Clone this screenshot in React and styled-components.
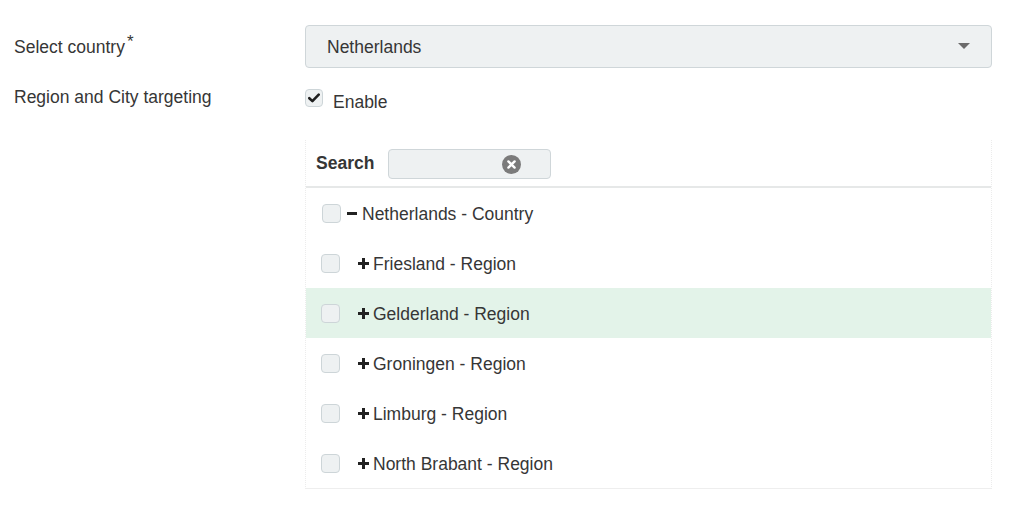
import React, { useState } from "react";
import styled, { createGlobalStyle } from "styled-components";

const GlobalStyle = createGlobalStyle`
    html, body {
        margin: 0;
        padding: 0;
        background: #ffffff;
    }
    body {
        font-family: "Liberation Sans", Arial, Helvetica, sans-serif;
        font-size: 17.5px;
        color: #363636;
    }
`;

const regions = [
    "Friesland - Region",
    "Gelderland - Region",
    "Groningen - Region",
    "Limburg - Region",
    "North Brabant - Region",
];

function CheckIcon() {
    return (
        <svg width="12" height="10" viewBox="0 0 12 10">
            <path d="M1.3 5.2 L4.4 8.1 L10.7 1.7" fill="none" stroke="#1e1e1e" strokeWidth="2.6" strokeLinecap="round" strokeLinejoin="round" />
        </svg>
    );
}

function ClearIcon() {
    return (
        <svg width="19" height="19" viewBox="0 0 19 19">
            <circle cx="9.5" cy="9.5" r="9.5" fill="#7b7b7b" />
            <path d="M6.4 6.4 L12.6 12.6 M12.6 6.4 L6.4 12.6" stroke="#fff" strokeWidth="2.4" strokeLinecap="round" />
        </svg>
    );
}

function App() {
    const [enabled, setEnabled] = useState(true);
    const [hovered] = useState(1);

    return (
        <Page>
            <GlobalStyle />
            <FormRow $height={43} $top={25}>
                <Label>Select country<Star>*</Star></Label>
                <Select>
                    <span>Netherlands</span>
                    <Caret />
                </Select>
            </FormRow>
            <FormRow $height={30} $top={15}>
                <Label $shift={-2}>Region and City targeting</Label>
                <EnableLine onClick={() => setEnabled(!enabled)}>
                    <Box $size={18}>{enabled && <CheckIcon />}</Box>
                    <EnableText>Enable</EnableText>
                </EnableLine>
            </FormRow>
            <FormRow $top={27}>
                <div />
                <Panel>
                    <SearchBar>
                        <SearchLabel>Search</SearchLabel>
                        <SearchInput>
                            <ClearIcon />
                        </SearchInput>
                    </SearchBar>
                    <TreeRow>
                        <Box $size={19} $offset={1}></Box>
                        <Minus />
                        <NodeText>Netherlands - Country</NodeText>
                    </TreeRow>
                    {regions.map((name, i) => (
                        <TreeRow key={name} $active={i === hovered}>
                            <Box $size={19}></Box>
                            <Plus />
                            <NodeText>{name}</NodeText>
                        </TreeRow>
                    ))}
                </Panel>
            </FormRow>
        </Page>
    );
}

const Page = styled.div`
    width: 1024px;
    padding-bottom: 20px;
`;

const FormRow = styled.div`
    display: grid;
    grid-template-columns: 291px 1fr;
    align-items: center;
    padding: 0 32px 0 14px;
    margin-top: ${p => p.$top || 0}px;
    min-height: ${p => p.$height ? p.$height + "px" : "auto"};
`;

const Label = styled.div`
    line-height: 20px;
    margin-top: ${p => p.$shift ?? 1}px;
`;

const Star = styled.span`
    font-size: 17px;
    margin-left: 2px;
    position: relative;
    top: -6px;
`;

const Select = styled.div`
    height: 43px;
    box-sizing: border-box;
    display: flex;
    align-items: center;
    justify-content: space-between;
    padding: 2px 21px 0 21px;
    background: #eef1f2;
    border: 1px solid #cfd6d9;
    border-radius: 4px;
`;

const Caret = styled.span`
    width: 0;
    height: 0;
    border-left: 6.5px solid transparent;
    border-right: 6.5px solid transparent;
    border-top: 6px solid #6b6b6b;
    margin-top: -4px;
`;

const EnableLine = styled.label`
    display: flex;
    align-items: center;
    gap: 10px;
    height: 30px;
    cursor: pointer;
`;

const EnableText = styled.span`
    position: relative;
    top: 4px;
`;

const Box = styled.span`
    width: ${p => p.$size}px;
    height: ${p => p.$size}px;
    box-sizing: border-box;
    display: inline-flex;
    align-items: center;
    justify-content: center;
    background: #eef1f2;
    border: 1px solid #cdd5d8;
    border-radius: 4px;
    margin-left: ${p => p.$offset || 0}px;
    flex-shrink: 0;
`;

const Panel = styled.div`
    border-left: 1px dotted #ececec;
    border-right: 1px dotted #ececec;
    border-bottom: 1px solid #eeeeee;
`;

const SearchBar = styled.div`
    height: 46px;
    display: flex;
    align-items: center;
    padding-left: 10px;
    gap: 14px;
    border-bottom: 2px solid #e6e8e8;
`;

const SearchLabel = styled.span`
    font-weight: bold;
`;

const SearchInput = styled.div`
    width: 163px;
    height: 30px;
    box-sizing: border-box;
    background: #eef1f2;
    border: 1px solid #cfd6d9;
    border-radius: 4px;
    display: flex;
    align-items: center;
    justify-content: flex-end;
    padding-right: 29px;
    margin-top: 2px;
`;

const TreeRow = styled.div`
    height: 50px;
    display: flex;
    align-items: center;
    padding-left: 15px;
    background: ${p => p.$active ? "#e3f3e9" : "transparent"};
`;

const Minus = styled.span`
    width: 10px;
    height: 3px;
    background: #222;
    margin: 1px 5px 0 6px;
`;

const Plus = styled.span`
    position: relative;
    width: 11px;
    height: 11px;
    margin: 1px 4px 0 18px;
    &::before, &::after {
        content: "";
        position: absolute;
        background: #222;
    }
    &::before {
        left: 0;
        top: 4px;
        width: 11px;
        height: 3px;
    }
    &::after {
        left: 4px;
        top: 0;
        width: 3px;
        height: 11px;
    }
`;

const NodeText = styled.span`
    margin-top: 2px;
`;

export default App;
